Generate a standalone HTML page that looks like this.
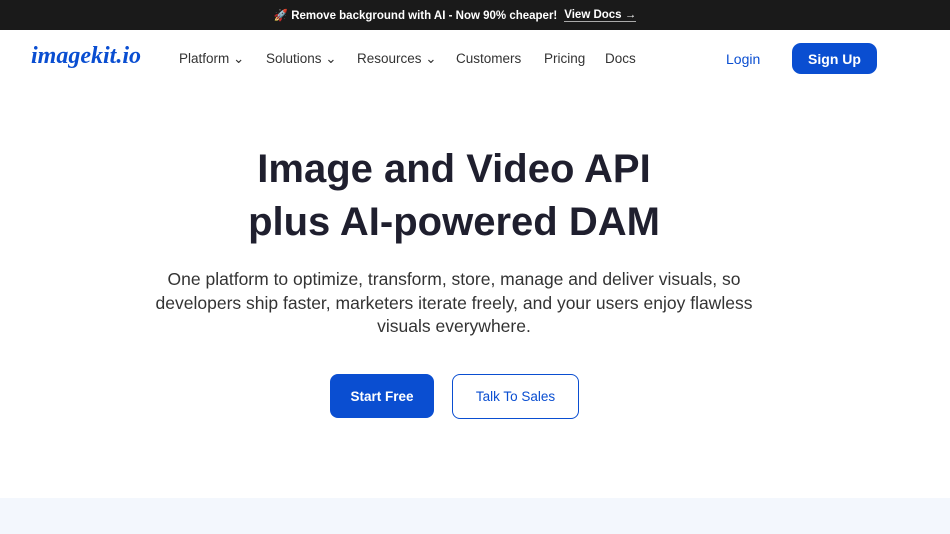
<!DOCTYPE html>
<html><head><meta charset="utf-8"><style>
*{margin:0;padding:0;box-sizing:border-box}
body{width:950px;height:534px;overflow:hidden;background:#fff;font-family:"Liberation Sans",sans-serif;position:relative}
.top{height:30px;background:#1a1a1a;color:#fff;font-size:11.5px;font-weight:bold;display:flex;align-items:center;justify-content:center;padding-right:40px}
.top u{margin-left:7px;text-decoration:none;border-bottom:1px solid #aaa}
.nav{position:absolute;top:30px;left:0;width:950px;height:58px}
.logo{position:absolute;left:31px;top:13px;font-family:"Liberation Serif",serif;font-style:italic;font-weight:bold;font-size:24px;color:#0a4ed1}
.links{position:absolute;top:21px;left:179px;font-size:13.5px;color:#333}
.links span{position:absolute;white-space:nowrap}
.login{position:absolute;left:726px;top:21px;color:#0a4ed1;font-size:14px}
.sign{position:absolute;left:792px;top:13px;width:85px;height:31px;border-radius:9px;background:#0a4ed1;color:#fff;font-size:14px;font-weight:bold;display:flex;align-items:center;justify-content:center}
h1{position:absolute;top:143px;left:0;width:908px;text-align:center;font-size:40px;line-height:53px;color:#1f1f2e;font-weight:bold}
p{position:absolute;top:268px;left:0;width:908px;text-align:center;font-size:17.5px;line-height:23.5px;color:#333}
.b1{position:absolute;left:330px;top:374px;width:104px;height:44px;background:#0a4ed1;color:#fff;border-radius:8px;font-size:13.5px;font-weight:bold;display:flex;align-items:center;justify-content:center}
.b2{position:absolute;left:452px;top:374px;width:127px;height:45px;border:1px solid #0a4ed1;color:#0a4ed1;border-radius:8px;font-size:13.5px;display:flex;align-items:center;justify-content:center}
.bot{position:absolute;top:498px;left:0;width:950px;height:36px;background:#f3f7fd}
</style></head><body>
<div class="top">🚀 Remove background with AI - Now 90% cheaper! <u>View Docs →</u></div>
<div class="nav">
<div class="logo">imagekit.io</div>
<div class="links">
<span style="left:0">Platform ⌄</span><span style="left:87px">Solutions ⌄</span><span style="left:178px">Resources ⌄</span><span style="left:277px">Customers</span><span style="left:365px">Pricing</span><span style="left:426px">Docs</span>
</div>
<div class="login">Login</div>
<div class="sign">Sign Up</div>
</div>
<h1>Image and Video API<br>plus AI-powered DAM</h1>
<p>One platform to optimize, transform, store, manage and deliver visuals, so<br>developers ship faster, marketers iterate freely, and your users enjoy flawless<br>visuals everywhere.</p>
<div class="b1">Start Free</div>
<div class="b2">Talk To Sales</div>
<div class="bot"></div>
</body></html>
